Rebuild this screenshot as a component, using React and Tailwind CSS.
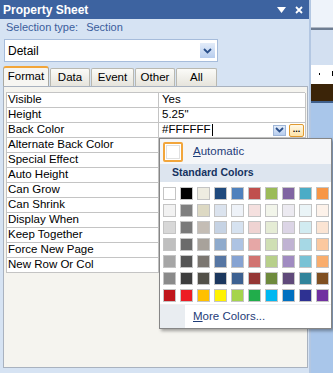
import { Fragment } from "react";

// property rows shown in the Format tab
const rows = [
  ["Visible", "Yes"],
  ["Height", '5.25"'],
  ["Back Color", "#FFFFFF"],
  ["Alternate Back Color", ""],
  ["Special Effect", ""],
  ["Auto Height", ""],
  ["Can Grow", ""],
  ["Can Shrink", ""],
  ["Display When", ""],
  ["Keep Together", ""],
  ["Force New Page", ""],
  ["New Row Or Col", ""],
];

// theme + standard colour palette (7 rows x 10)
const palette = [
  ["#ffffff", "#000000", "#eeece1", "#1f497d", "#4f81bd", "#c0504d", "#9bbb59", "#8064a2", "#4bacc6", "#f79646"],
  ["#f2f2f2", "#7f7f7f", "#ddd9c3", "#dbe3ee", "#eef2f8", "#f5e0df", "#f2f5ea", "#eceaf1", "#eaf4f7", "#fdf2ea"],
  ["#d8d8d8", "#7a7a7a", "#c4bdb5", "#c6d3e4", "#d6e2f0", "#efd3d2", "#e5ecd5", "#dcd5e6", "#d1ebf1", "#fbe4d3"],
  ["#bfbfbf", "#6b6b6b", "#a8a29b", "#8eaacc", "#adc3e3", "#e6a7a6", "#cfdfb4", "#c0b3d3", "#a6d8e5", "#fbc89f"],
  ["#a6a6a6", "#555555", "#7b7670", "#5676a3", "#86a3d2", "#d17370", "#b7cf8a", "#a08bc1", "#79c2d5", "#f9ad6d"],
  ["#8a8a8a", "#3d3d3d", "#525048", "#1b375e", "#3d6191", "#953735", "#6e8a3d", "#5f497a", "#31849b", "#7f4f21"],
  ["#c0161c", "#ed1c24", "#ffc000", "#fff200", "#a5d44c", "#21ad4b", "#00b7f1", "#0070c0", "#2e3192", "#7030a0"],
];

const tabs = [
  { name: "Format", w: "w-[46px]", active: true },
  { name: "Data", w: "w-[40px]" },
  { name: "Event", w: "w-[43px]" },
  { name: "Other", w: "w-[40px]" },
  { name: "All", w: "w-[41px]" },
];

function Chevron({ className }) {
  return (
    <svg width="9" height="6" viewBox="0 0 9 6" className={className}>
      <path d="M1 1 L4.5 4.5 L8 1" fill="none" stroke="#2a4f8a" strokeWidth="1.8" />
    </svg>
  );
}

function ColorPopup() {
  return (
    <div className="absolute left-[159px] top-[138px] w-[173px] h-[191px] border border-[#868686] bg-white shadow-[2px_2px_3px_rgba(0,0,0,0.35)] flex flex-col">
      {/* Automatic */}
      <div className="h-[25px] flex items-center bg-[#f5f6f8] pl-[3px]">
        <div className="w-[20px] h-[20px] rounded-[2px] border-2 border-[#f2a63c] bg-white p-[1px]">
          <div className="w-full h-full border border-[#e0e0e0]" />
        </div>
        <span className="ml-[10px] text-[11.5px] text-[#1e3c78]">
          <span className="underline">A</span>utomatic
        </span>
      </div>

      {/* header */}
      <div className="h-[18px] bg-[#dde5ef] flex items-center pl-[12px]">
        <span className="text-[10.5px] font-bold text-[#15325f]">Standard Colors</span>
      </div>

      {/* swatches */}
      <div className="pt-[5px] pl-[3px] grid grid-cols-[repeat(10,13px)] gap-[4px]">
        {palette.flat().map((c, i) => (
          <div
            key={i}
            className="w-[13px] h-[13px] border border-[#c4c4c4]"
            style={{ backgroundColor: c }}
          />
        ))}
      </div>

      {/* more colors */}
      <div className="mt-[2px] h-[24px] flex border-t border-[#eef0f2]">
        <div className="w-[25px] bg-[#e9edf1]" />
        <span className="ml-[8px] self-center text-[11.5px] text-[#1e3c78]">
          <span className="underline">M</span>ore Colors...
        </span>
      </div>
    </div>
  );
}

export default function App() {
  return (
    <div className="relative w-[333px] h-[373px] overflow-hidden flex font-['Liberation_Sans',Arial,sans-serif] bg-[#a9c6ea]">
      {/* Property sheet panel */}
      <div className="w-[311px] h-full flex flex-col bg-[#d6e3f3] border-r-2 border-[#b3c7e2]">
        {/* title bar */}
        <div className="h-[19px] bg-[#3d63a0] flex items-center pl-[3px] pr-[4px]">
          <span className="text-white font-bold text-[12px] leading-none">Property Sheet</span>
          <div className="ml-auto flex items-center gap-[9px] pr-[2px]">
            <svg width="9" height="6" viewBox="0 0 9 6">
              <path d="M0 0 H9 L4.5 6 Z" fill="#ffffff" />
            </svg>
            <svg width="8" height="8" viewBox="0 0 8 8">
              <path d="M1 1 L7 7 M7 1 L1 7" stroke="#ffffff" strokeWidth="1.8" />
            </svg>
          </div>
        </div>

        {/* selection type */}
        <div className="h-[15px] mt-[1px] pl-[6px] flex items-center text-[11px] text-[#3a5d9c]">
          <span>Selection type:</span>
          <span className="ml-[8px]">Section</span>
        </div>

        {/* object dropdown */}
        <div className="mt-[4px] ml-[4px] w-[214px] h-[23px] bg-white border border-[#a6bcdb] flex items-center pl-[3px] pr-[2px]">
          <span className="text-[12px] text-black">Detail</span>
          <div className="ml-auto w-[15px] h-[15px] bg-gradient-to-b from-[#e3ecf9] to-[#b7cdee] flex items-center justify-center">
            <Chevron />
          </div>
        </div>

        {/* tabs */}
        <div className="mt-[4px] ml-[3px] h-[20px] flex items-end gap-[1px]">
          {tabs.map((t) =>
            t.active ? (
              <div
                key={t.name}
                className={`${t.w} h-[20px] rounded-t-[3px] border border-b-0 border-[#a9a9a2] border-t-2 border-t-[#f2a53a] bg-[#f7f6f2] flex items-center justify-center text-[11.5px] text-black`}
              >
                {t.name}
              </div>
            ) : (
              <div
                key={t.name}
                className={`${t.w} h-[18px] rounded-t-[2px] border border-b-0 border-[#b9b8b0] bg-gradient-to-b from-[#fbfbf8] to-[#e6e4dc] flex items-center justify-center text-[11.5px] text-black`}
              >
                {t.name}
              </div>
            )
          )}
        </div>

        {/* tab page */}
        <div className="ml-[3px] mr-[1px] mb-[5px] flex-1 bg-[#f5f4ef] border border-[#a9b2bf] pt-[5px] pl-[2px]">
          <div className="w-[299px] grid grid-cols-[152px_147px] border-t border-l border-[#c4c4c4] bg-white">
            {rows.map(([label, value]) => (
              <Fragment key={label}>
                <div className="h-[15px] border-r border-b border-[#c4c4c4] pl-[1px] flex items-center text-[11.5px] text-black leading-none">
                  {label}
                </div>
                <div className="h-[15px] border-r border-b border-[#c4c4c4] pl-[3px] flex items-center text-[11.5px] text-black leading-none">
                  {value}
                  {label === "Back Color" && (
                    <>
                      <span className="ml-[1px] w-[1px] h-[12px] bg-black" />
                      <div className="ml-auto w-[13px] h-[11px] bg-gradient-to-b from-[#e3ecf9] to-[#b7cdee] border border-[#9fb6d8] flex items-center justify-center">
                        <Chevron />
                      </div>
                      <div className="ml-[3px] mr-[1px] w-[15px] h-[13px] rounded-[2px] border border-[#e09a30] bg-gradient-to-b from-[#fff8e6] to-[#fde3a8] flex items-end justify-center pb-[2px]">
                        <span className="text-[9px] font-bold leading-none text-black">...</span>
                      </div>
                    </>
                  )}
                </div>
              </Fragment>
            ))}
          </div>
        </div>
      </div>

      {/* background window strip on the right */}
      <div className="flex-1 flex flex-col">
        <div className="h-[27px] bg-[#eef3fa]" />
        <div className="h-[1px] bg-[#b0b8c4]" />
        <div className="h-[2px] bg-[#6e7d92]" />
        <div className="h-[35px] bg-[#d3e0f1]" />
        <div className="h-[19px] bg-white relative">
          <span className="absolute left-[8px] top-[8px] w-[1px] h-[2px] bg-black" />
          <span className="absolute right-[0px] top-[6px] w-[1px] h-[5px] bg-black" />
        </div>
        <div className="h-[17px] bg-[#3b2408]" />
        <div className="h-[2px] bg-[#3f5f8c]" />
        <div className="flex-1 bg-[#a9c6ea]" />
      </div>

      <ColorPopup />
    </div>
  );
}
